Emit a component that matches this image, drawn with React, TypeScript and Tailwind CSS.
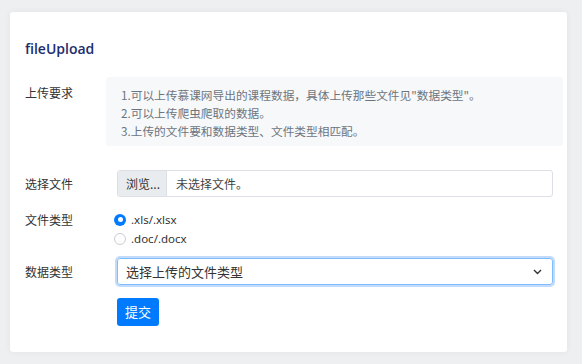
import React from "react";

const cjk = { fontFamily: '"Noto Sans CJK SC", "Noto Sans", sans-serif' };

export default function App() {
  return (
    <div className="w-[582px] h-[364px] bg-[#eeeff1] pt-[12px] pl-[10px] pr-[15px] pb-[12px]" style={cjk}>
      <div className="h-[340px] bg-white rounded-[3px] shadow-[0_0_6px_rgba(0,0,0,0.06)] pl-[15px] pr-[4px] pt-[26px]">
        <div
          className="h-[20px] flex items-center text-[14px] font-semibold text-[#1c2d6b]"
          style={{ fontFamily: '"Open Sans", "Noto Sans", sans-serif' }}
        >
          fileUpload
        </div>

        <div className="flex mt-[19px]">
          <div className="w-[81px] pt-[7px] text-[12px] text-[#333] leading-[18px]">上传要求</div>
          <div className="flex-1 h-[69px] bg-[#f7f8fa] rounded-[3px] pl-[15px] pt-[9px] text-[11.7px] leading-[18px] text-[#6c757d]">
            <div>1.可以上传慕课网导出的课程数据，具体上传那些文件见"数据类型"。</div>
            <div>2.可以上传爬虫爬取的数据。</div>
            <div>3.上传的文件要和数据类型、文件类型相匹配。</div>
          </div>
        </div>

        <div className="pr-[10px]">
          <div className="flex items-center mt-[24px]">
            <div className="w-[92px] text-[12px] text-[#333]">选择文件</div>
            <div className="flex-1 h-[27px] flex border border-[#dcdfe3] rounded-[3px] overflow-hidden text-[12px]">
              <div className="w-[49px] bg-[#e9ecef] border-r border-[#dcdfe3] flex items-center pl-[8px] text-[#333]">浏览...</div>
              <div className="flex items-center pl-[9px] text-[#444]">未选择文件。</div>
            </div>
          </div>

          <div className="flex mt-[13px]">
            <div className="w-[92px] text-[12px] text-[#333] h-[19px] flex items-center">文件类型</div>
            <div className="flex flex-col text-[11.5px] text-[#333]">
              <div className="h-[19px] flex items-center">
                <span className="w-[12px] h-[12px] rounded-full bg-[#007bff] flex items-center justify-center ml-[-3px]">
                  <span className="w-[5px] h-[5px] rounded-full bg-white" />
                </span>
                <span className="ml-[5px]" style={{ fontFamily: '"Noto Sans", sans-serif' }}>.xls/.xlsx</span>
              </div>
              <div className="h-[19px] flex items-center">
                <span className="w-[12px] h-[12px] rounded-full bg-white border border-[#c9ccd0] ml-[-3px]" />
                <span className="ml-[5px]" style={{ fontFamily: '"Noto Sans", sans-serif' }}>.doc/.docx</span>
              </div>
            </div>
          </div>

          <div className="flex items-center mt-[10px]">
            <div className="w-[92px] text-[12px] text-[#333]">数据类型</div>
            <div className="flex-1 h-[27px] border border-[#80bdff] rounded-[3px] ring-2 ring-[#c2dbfb] flex items-center justify-between pl-[8px] pr-[10px] text-[13px] text-[#333]">
              <span>选择上传的文件类型</span>
              <svg width="9" height="6" viewBox="0 0 9 6" fill="none">
                <path d="M1 1l3.5 3.5L8 1" stroke="#333" strokeWidth="1.4" />
              </svg>
            </div>
          </div>

          <div className="flex mt-[13px]">
            <div className="w-[92px]" />
            <div className="w-[42px] h-[28px] bg-[#007bff] rounded-[3px] text-white text-[13px] flex items-center justify-center">提交</div>
          </div>
        </div>
      </div>
    </div>
  );
}
